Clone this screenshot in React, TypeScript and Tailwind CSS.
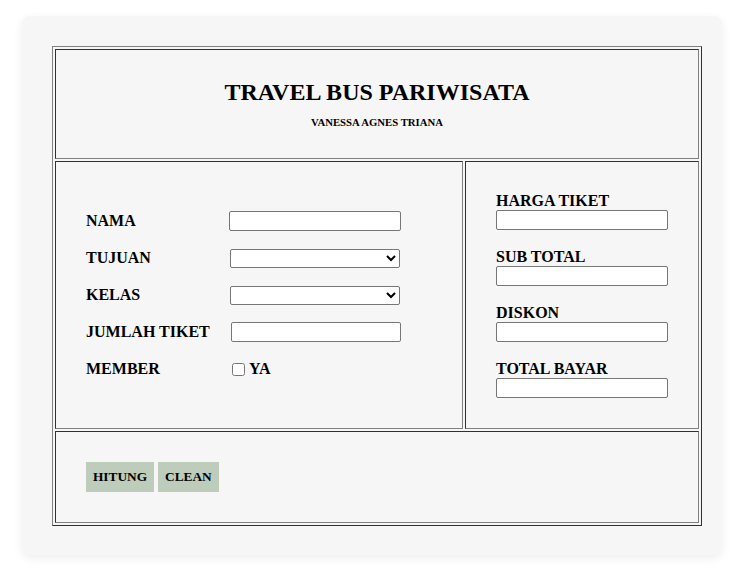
const inputCls = "border border-[#767676] rounded-[2px] bg-white";

// Form row (left cell)
const Row = ({ label, children }: { label: string; children: React.ReactNode }) => (
  <div className="flex items-center h-[37px]">
    <span className="w-[143px] text-[16px] font-bold leading-[18px]">{label}</span>
    {children}
  </div>
);

// Output field (right cell)
const Field = ({ label }: { label: string }) => (
  <div className="flex flex-col">
    <label className="text-[16px] font-bold leading-[20px]">{label}</label>
    <input type="text" className={`${inputCls} -mt-[1px] w-[172px] h-[20px]`} />
  </div>
);

const cell = "border border-t-[#303030] border-l-[#303030] border-r-[#808080] border-b-[#808080]";

export default function App() {
  return (
    <div className="min-h-screen bg-white pt-4 pl-[22px] font-['Liberation_Serif',serif] text-black">
      <div className="w-[700px] h-[539px] bg-[#f6f6f6] rounded-lg shadow-[0_3px_10px_rgba(0,0,0,0.07)] pt-[30px] pl-[30px]">
        <div className="w-[650px] border border-t-[#808080] border-l-[#808080] border-r-[#303030] border-b-[#303030] p-[2px] flex flex-col gap-[2px]">
          {/* header */}
          <div className={`${cell} h-[110px] flex flex-col items-center justify-center pb-[3px]`}>
            <h2 className="text-[24px] font-bold leading-[28px]">TRAVEL BUS PARIWISATA</h2>
            <h6 className="text-[10.72px] font-bold leading-[12px] mt-[10px]">VANESSA AGNES TRIANA</h6>
          </div>

          {/* form */}
          <div className="flex gap-[2px] h-[268px]">
            <div className={`${cell} w-[408px] flex flex-col justify-center pl-[30px]`}>
              <Row label="NAMA">
                <input type="text" className={`${inputCls} w-[172px] h-[20px]`} />
              </Row>
              <Row label="TUJUAN">
                <select className={`${inputCls} ml-[1px] w-[170px] h-[19px]`}>
                  <option></option>
                </select>
              </Row>
              <Row label="KELAS">
                <select className={`${inputCls} ml-[1px] w-[170px] h-[19px]`}>
                  <option></option>
                </select>
              </Row>
              <Row label="JUMLAH TIKET">
                <input type="text" className={`${inputCls} ml-[2px] w-[170px] h-[20px]`} />
              </Row>
              <Row label="MEMBER">
                <label className="flex items-center text-[16px] font-bold">
                  <input type="checkbox" className="ml-[3px] mr-[4px] w-[13px] h-[13px]" />
                  YA
                </label>
              </Row>
            </div>
            <div className={`${cell} w-[234px] flex flex-col justify-center gap-[17px] pl-[30px] pb-[1px]`}>
              <Field label="HARGA TIKET" />
              <Field label="SUB TOTAL" />
              <Field label="DISKON" />
              <Field label="TOTAL BAYAR" />
            </div>
          </div>

          {/* buttons */}
          <div className={`${cell} h-[92px] flex items-center gap-[4px] pl-[30px]`}>
            <button className="h-[30px] px-[7px] bg-[#bdccbb] text-[13.33px] font-bold">HITUNG</button>
            <button className="h-[30px] px-[7px] bg-[#bdccbb] text-[13.33px] font-bold">CLEAN</button>
          </div>
        </div>
      </div>
    </div>
  );
}
